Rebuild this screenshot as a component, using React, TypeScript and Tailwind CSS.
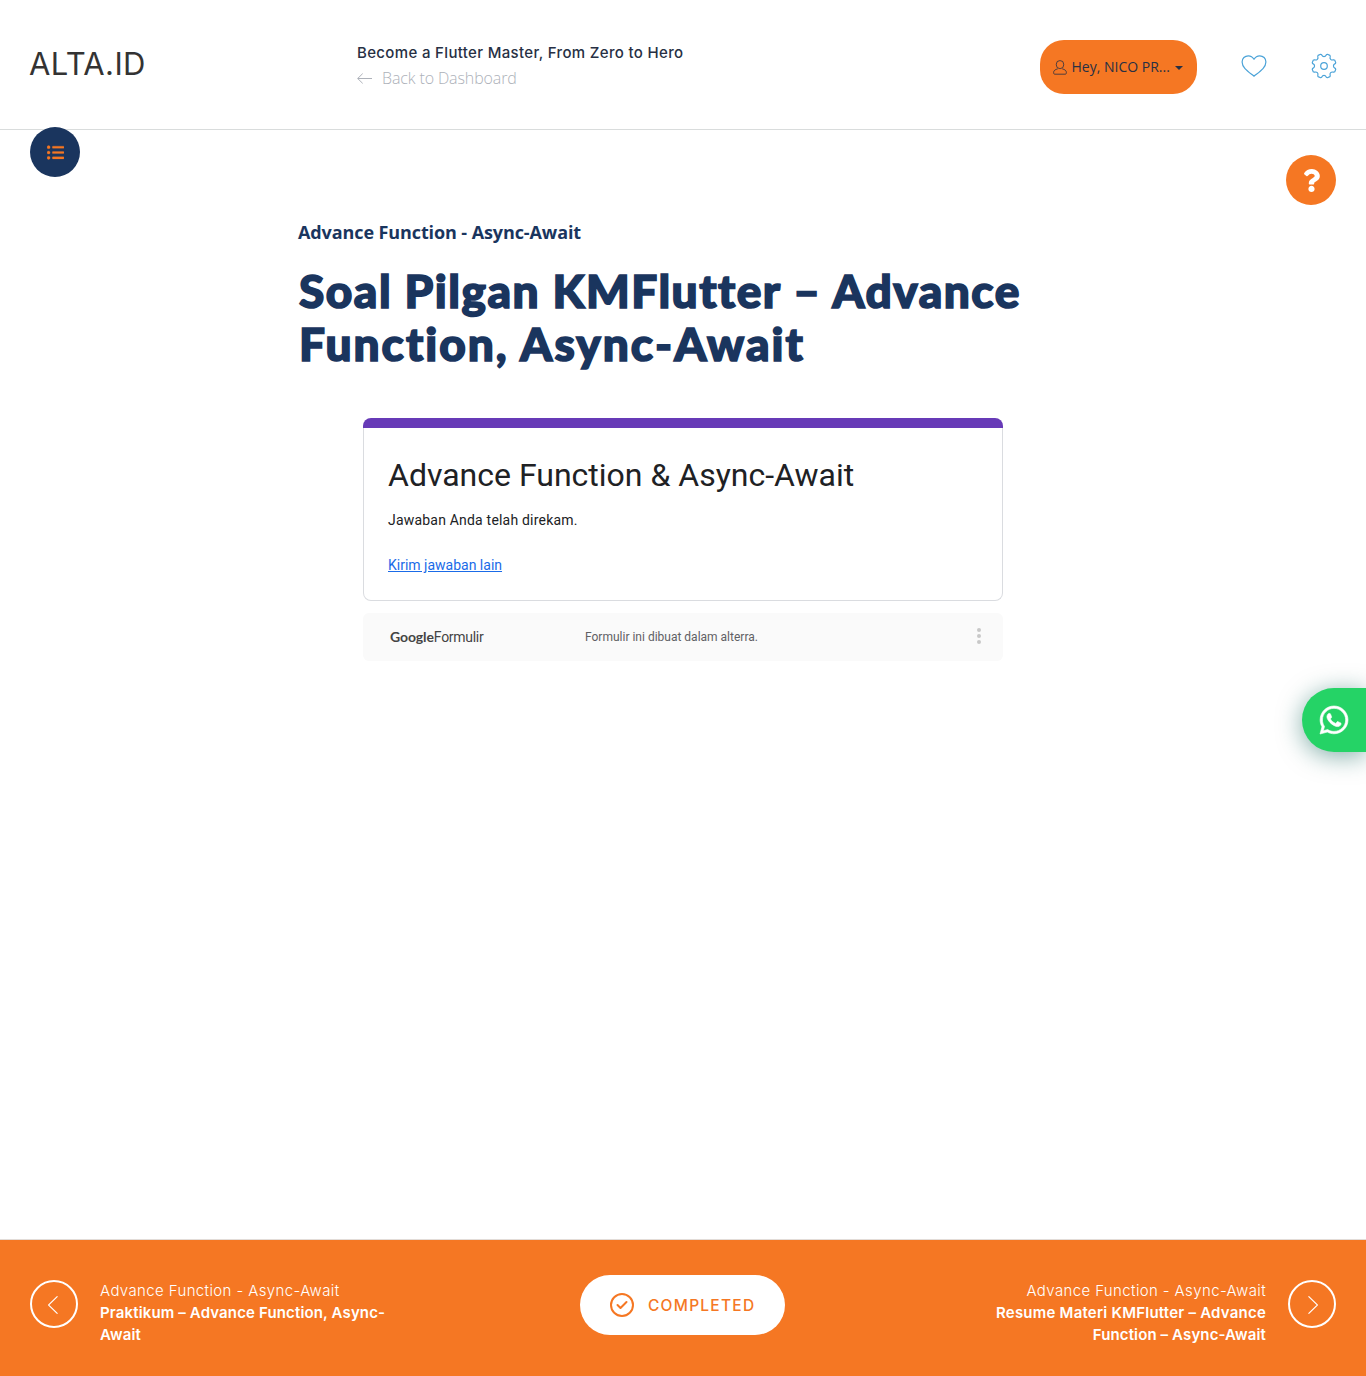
import React from "react";
import { FaListUl, FaQuestion, FaWhatsapp } from "react-icons/fa";

const point = (r: number, deg: number) => {
  const a = (deg * Math.PI) / 180;
  return `${(13 + r * Math.cos(a)).toFixed(2)} ${(13 + r * Math.sin(a)).toFixed(2)}`;
};

// Eight rounded teeth separated by concave notches.
const gearPath =
  Array.from({ length: 8 }, (_, i) => {
    const n = i * 45;
    return `${i === 0 ? "M" : "L"}${point(12.2, n - 16)} Q${point(12, n - 13)} ${point(11, n - 11)} C${point(9.1, n - 8)} ${point(9.1, n + 8)} ${point(11, n + 11)} Q${point(12, n + 13)} ${point(12.2, n + 16)}`;
  }).join(" ") + " Z";

function GearIcon() {
  return (
    <svg className="h-[26px] w-[26px]" viewBox="0 0 26 26" fill="none" stroke="#4ba3d8" strokeWidth="1.2" strokeLinejoin="round">
      <path d={gearPath} />
      <circle cx="13" cy="13" r="3.3" />
    </svg>
  );
}

function HeartIcon() {
  return (
    <svg className="h-[22px] w-[26px]" viewBox="0 0 26 22" fill="none" stroke="#4ba3d8" strokeWidth="1.2" strokeLinejoin="round">
      <path d="M13 4.3C11.6 1.9 9.6.8 7.3.8 3.8.8 1.1 3.4 1.1 7c0 5.8 6.3 9.7 11.9 14.2C18.600 16.700 24.900 12.800 24.900 7c0-3.600-2.700-6.200-6.200-6.200-2.300 0-4.300 1.100-5.700 3.500z" />
    </svg>
  );
}

function UserIcon() {
  return (
    <svg className="h-[15px] w-[14px] shrink-0" viewBox="0 0 14 15" fill="none" stroke="#273044" strokeWidth="0.8">
      <rect x="3.300" y="0.600" width="7.400" height="8" rx="3.600" />
      <path d="M4.700 8.900C2.200 9.400.6 10.600.6 12.700c0 1 .4 1.500 1.300 1.500h10.200c.9 0 1.300-.5 1.300-1.500 0-2.100-1.600-3.300-4.100-3.800" />
    </svg>
  );
}

function Header() {
  return (
    <header className="flex h-[130px] items-start border-b border-[#d9dcdc]">
      <div className="w-[327px] shrink-0 pt-[44px] pl-[29px] font-['Inter'] text-[31px] leading-[40px] tracking-[0.35px] whitespace-nowrap text-[#333]">
        ALTA.ID
      </div>
      <div className="w-[683px] shrink-0 pt-[41px] pl-[30px] whitespace-nowrap">
        <div className="font-['Inter'] text-[15px] leading-[24px] font-medium tracking-[0.34px] text-[#273044]">
          Become a Flutter Master, From Zero to Hero
        </div>
        <div className="flex items-center font-['Open_Sans'] text-[16px] leading-[26px] font-light tracking-[-0.12px] text-[#adb1b9]">
          <svg className="mr-[10px] h-[11px] w-[15px]" viewBox="0 0 15 11" fill="none" stroke="#adb1b9">
            <path d="M15 5.500H.7M5.700.6.7 5.500l5 4.900" />
          </svg>
          Back to Dashboard
        </div>
      </div>
      <button className="mt-[40px] ml-[30px] flex h-[54px] w-[157px] shrink-0 items-center rounded-[24px] bg-[#f57723] pl-[13px] font-['Open_Sans'] text-[14px] whitespace-nowrap text-[#273044]">
        <UserIcon />
        <span className="-mt-[2px] ml-[4.5px]">Hey, NICO PR...</span>
        <svg className="mt-[2px] ml-[5.5px] h-[4px] w-[8px]" viewBox="0 0 8 4" fill="#273044">
          <path d="M0 0h8L4 4z" />
        </svg>
      </button>
      <div className="mt-[55px] ml-[44px]">
        <HeartIcon />
      </div>
      <div className="mt-[53px] ml-[43.5px]">
        <GearIcon />
      </div>
    </header>
  );
}

function FormCard() {
  return (
    <section className="mx-auto mt-[48px] w-[640px] font-['Roboto']">
      <div className="h-[10px] rounded-t-[8px] bg-[#673ab7]" />
      <div className="h-[173px] rounded-b-[8px] border border-t-0 border-[#dadce0] pt-[27px] pl-[24px]">
        <h2 className="text-[32px] leading-[40px] text-[#202124]">Advance Function &amp; Async-Await</h2>
        <p className="mt-[15px] text-[14px] leading-[20px] tracking-[0.2px] text-[#202124]">Jawaban Anda telah direkam.</p>
        <a className="mt-[25px] block text-[14px] leading-[20px] text-[#1a6be8] underline">Kirim jawaban lain</a>
      </div>
      <div className="mt-[12px] flex h-[48px] items-center rounded-[6px] bg-[#fafafa] text-[12px] text-[#5f6064]">
        <div className="ml-[27px] flex w-[195px] items-baseline text-[14px] text-[#444]">
          <span className="font-['Lato'] text-[14px] font-bold tracking-[-0.1px]">Google</span>
          <span className="tracking-[-0.3px]">Formulir</span>
        </div>
        <span>Formulir ini dibuat dalam alterra.</span>
        <div className="mr-[22px] mb-[2px] ml-auto flex flex-col gap-[2px]">
          <i className="h-1 w-1 rounded-full bg-[#c8c8c8]" />
          <i className="h-1 w-1 rounded-full bg-[#c8c8c8]" />
          <i className="h-1 w-1 rounded-full bg-[#c8c8c8]" />
        </div>
      </div>
    </section>
  );
}

function CircleArrow({ right = false }: { right?: boolean }) {
  return (
    <div className="flex h-12 w-12 shrink-0 items-center justify-center rounded-full border-2 border-white">
      <svg
        className={right ? "mt-[2px] ml-[2px] h-[18px] w-[10px]" : "mt-[2px] mr-[2px] h-[18px] w-[10px]"}
        viewBox="0 0 10 18"
        fill="none"
        stroke="white"
        strokeWidth="1.1"
      >
        <path d={right ? "M.5.3 9.500 9 .5 17.700" : "M9.500.3.5 9l9 8.700"} />
      </svg>
    </div>
  );
}

function Footer() {
  return (
    <footer className="flex h-[137px] items-start justify-between border-t border-[#e2dcd8] bg-[#f57723] px-[30px] font-['Inter'] text-[15px] leading-[22px] whitespace-nowrap text-white">
      <div className="mt-[40px] flex w-[399px] gap-[22px]">
        <CircleArrow />
        <div>
          <div className="font-light tracking-[0.38px]">Advance Function - Async-Await</div>
          <div className="font-semibold tracking-[0.14px]">
            Praktikum – Advance Function, Async-
            <br />
            Await
          </div>
        </div>
      </div>
      <button className="mt-[35px] flex h-[60px] w-[205px] items-center rounded-full bg-white pl-[30px] text-[#f57723]">
        <svg className="h-6 w-6" viewBox="0 0 24 24" fill="none" stroke="currentColor" strokeWidth="2">
          <circle cx="12" cy="12" r="11" />
          <path d="m7.500 12 3 3 6-6" strokeLinecap="round" strokeLinejoin="round" />
        </svg>
        <span className="mt-[2px] ml-[14px] text-[15.5px] font-medium tracking-[1.25px]">COMPLETED</span>
      </button>
      <div className="mt-[40px] flex w-[400px] justify-end gap-[22px] text-right">
        <div>
          <div className="font-light tracking-[0.38px]">Advance Function - Async-Await</div>
          <div className="font-semibold tracking-[0.22px]">
            Resume Materi KMFlutter – Advance
            <br />
            <span className="tracking-[0.12px]">Function – Async-Await</span>
          </div>
        </div>
        <CircleArrow right />
      </div>
    </footer>
  );
}

export default function App() {
  return (
    <div className="relative flex h-[1376px] w-[1366px] flex-col overflow-hidden bg-white">
      <Header />
      <main className="flex-1">
        <div className="mx-auto w-[770px] pt-[90px] whitespace-nowrap text-[#1a355e]">
          <p className="font-['Open_Sans'] text-[18px] leading-[25px] font-bold tracking-[-0.1px]">Advance Function - Async-Await</p>
          <h1 className="mt-[19px] pl-px font-['Lato'] text-[46px] leading-[53px] font-black [-webkit-text-stroke:1.6px_#1a355e]">
            <span className="block tracking-[1.5px]">Soal Pilgan KMFlutter – Advance</span>
            <span className="block tracking-[2px]">Function, Async-Await</span>
          </h1>
        </div>
        <FormCard />
      </main>
      <Footer />
      <button className="absolute top-[127px] left-[30px] flex h-[50px] w-[50px] items-center justify-center rounded-full bg-[#1a355e] text-[#f57723]">
        <FaListUl className="h-[17px] w-[17px]" stroke="currentColor" strokeWidth="8" />
      </button>
      <button className="absolute top-[155px] right-[30px] flex h-[50px] w-[50px] items-center justify-center rounded-full bg-[#f57723] text-white">
        <FaQuestion className="h-[23px] w-[23px]" />
      </button>
      <a className="absolute top-[688px] right-0 flex h-16 w-16 items-center rounded-l-full bg-[#25d366] pl-[16px] text-white shadow-[0_4px_24px_rgba(7,94,84,0.5)]">
        <FaWhatsapp className="h-[32px] w-[32px]" stroke="currentColor" strokeWidth="10" />
      </a>
    </div>
  );
}
